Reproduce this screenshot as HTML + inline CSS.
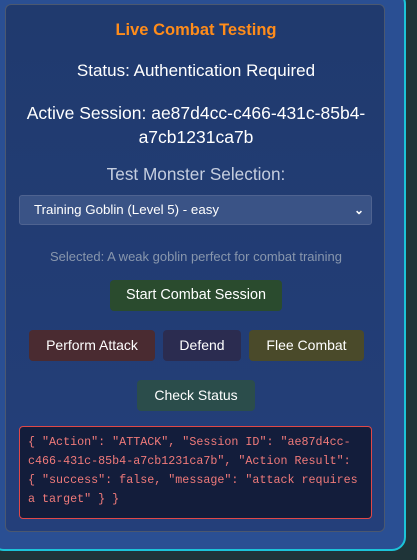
<!DOCTYPE html>
<html><head><style>
body{margin:0;width:417px;height:560px;background:#1f3438;overflow:hidden;font-family:"Liberation Sans",sans-serif;position:relative}
.outer{position:absolute;left:-10px;top:-10px;width:416px;height:561px;background:#2a4f93;border:2px solid #1cc4d8;border-radius:14px;box-sizing:border-box}
.panel{position:absolute;left:5px;top:4px;width:380px;height:528px;box-sizing:border-box;border:1px solid #4b5870;border-radius:6px;background:linear-gradient(#203a6e,#243f7a)}
.t{position:absolute;left:0;width:380px;text-align:center;color:#fff}
.btn{position:absolute;height:31px;line-height:31px;text-align:center;color:#fff;font-size:14px;border-radius:4px}
.out{position:absolute;left:13px;top:421px;width:353px;height:93px;box-sizing:border-box;border:1px solid #e04848;border-radius:4px;background:#131d3b;color:#f07a7a;font-family:"Liberation Mono","DejaVu Sans Mono",monospace;font-size:11.7px;line-height:19px;padding:6px 10px 0 8px}
</style></head><body>
<div class="outer"></div>
<div class="panel">
<div class="t" style="top:16px;font-size:16.5px;font-weight:bold;color:#ff8c1a">Live Combat Testing</div>
<div class="t" style="top:56px;font-size:17px">Status: Authentication Required</div>
<div class="t" style="top:96px;font-size:17.5px;line-height:24px">Active Session: ae87d4cc-c466-431c-85b4-<br>a7cb1231ca7b</div>
<div class="t" style="top:159px;font-size:17.2px;color:#c5cedf">Test Monster Selection:</div>
<div style="position:absolute;left:13px;top:190px;width:353px;height:30px;box-sizing:border-box;border:1px solid #4f6390;border-radius:3px;background:#3a5386;color:#fff;font-size:13.3px;line-height:28px;padding-left:14px">Training Goblin (Level 5) - easy<span style="position:absolute;right:7px;top:0;font-size:12px;font-weight:bold">&#8964;</span></div>
<div class="t" style="top:244px;font-size:13px;color:#8896ad">Selected: A weak goblin perfect for combat training</div>
<div class="btn" style="left:104px;top:275px;width:172px;background:#2a4b2e;font-size:14.4px">Start Combat Session</div>
<div class="btn" style="left:23px;top:325px;width:126px;background:#4a2b31">Perform Attack</div>
<div class="btn" style="left:157px;top:325px;width:78px;background:#2b2c50">Defend</div>
<div class="btn" style="left:243px;top:325px;width:115px;background:#4a4a2a">Flee Combat</div>
<div class="btn" style="left:131px;top:375px;width:118px;background:#2b4d4b">Check Status</div>
<div class="out">{ "Action": "ATTACK", "Session ID": "ae87d4cc-c466-431c-85b4-a7cb1231ca7b", "Action Result": { "success": false, "message": "attack requires a target" } }</div>
</div>
</body></html>
